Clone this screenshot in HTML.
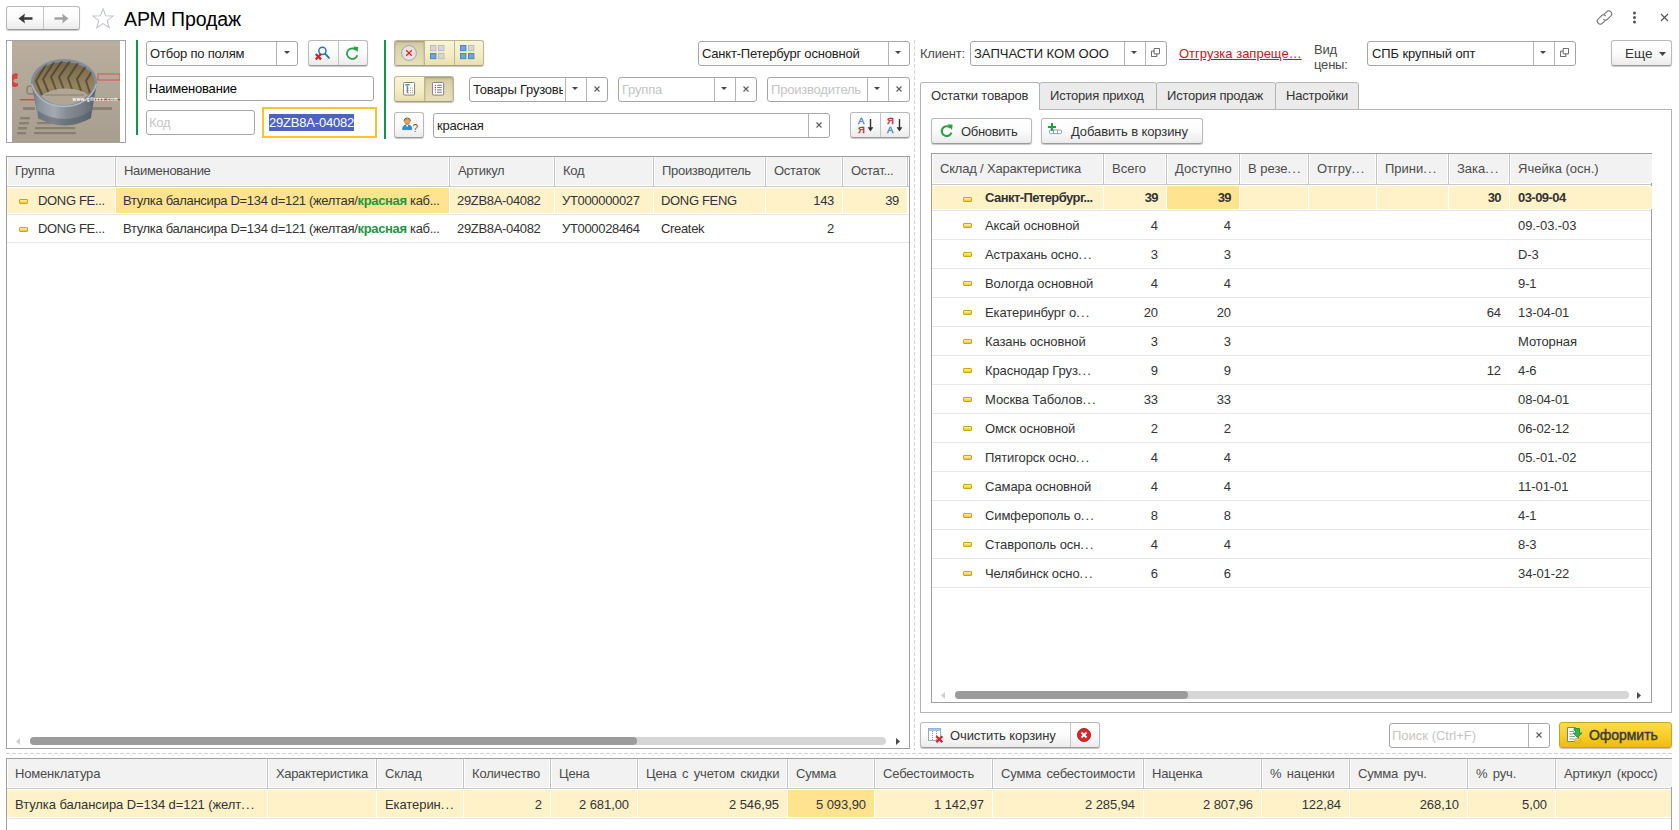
<!DOCTYPE html>
<html lang="ru">
<head>
<meta charset="utf-8">
<title>АРМ Продаж</title>
<style>
*{box-sizing:border-box;margin:0;padding:0}
html,body{width:1679px;height:830px;overflow:hidden;background:#fff}
body{position:relative;font-family:"Liberation Sans",Arial,sans-serif;font-size:13px;color:#333;line-height:15px;letter-spacing:-0.2px}
.a{position:absolute}
.inp{position:absolute;height:25px;border:1px solid #a6a6a6;border-radius:3px;background:#fff;white-space:nowrap;overflow:hidden}
.inp .t{position:absolute;left:3px;top:4px;color:#222}
.inp .ph{color:#c4c4c4}
.inp .dv{position:absolute;top:0;bottom:0;width:1px;background:#b4b4b4}
.inp svg{position:absolute}
.btn{position:absolute;height:26px;border:1px solid #b9b9b9;border-bottom-color:#9a9a9a;border-radius:3px;background:linear-gradient(#ffffff 0%,#fbfbfb 50%,#ebebeb 100%);box-shadow:0 1px 1px rgba(0,0,0,.22);white-space:nowrap}
.btn .dv{position:absolute;top:0;bottom:0;width:1px;background:#c4c4c4}
.btn svg,.ybtn svg{position:absolute}
.ybtn{position:absolute;height:26px;border:1px solid #bdb695;border-bottom-color:#a59f80;border-radius:3px;background:linear-gradient(#f9f4d6 0%,#f3ecc4 60%,#e9e0ae 100%);box-shadow:0 1px 1px rgba(0,0,0,.25)}
.ybtn .pr{position:absolute;top:0;bottom:0;background:linear-gradient(#cfc8a0 0%,#ddd5ad 40%,#e8e0b8 100%);box-shadow:inset 0 1px 2px rgba(0,0,0,.25)}
.ybtn .dv{position:absolute;top:0;bottom:0;width:1px;background:#bdb695}
.grid{position:absolute;border:1px solid #a0a0a0;background:#fff;overflow:hidden}
.hd{position:absolute;background:#f2f2f2;color:#4c4c4c;white-space:nowrap;overflow:hidden}
.hd span{position:absolute;left:8px;top:6px;letter-spacing:-0.3px}
.hl{position:absolute;background:#c3c3c3;width:1px}
.c{position:absolute;white-space:nowrap;overflow:hidden;color:#333;letter-spacing:-0.33px}
.c span{position:absolute;top:0}
.r{text-align:right}
.sep{position:absolute;left:0;right:0;height:1px;background:#e4e4e4}
.ic{position:absolute;width:9px;height:5px;border:1px solid #c9a415;border-radius:1px;background:linear-gradient(#fff3a8,#f0c82a)}
</style>
</head>
<body>

<!-- ===== title bar ===== -->
<div class="btn" style="left:6px;top:6px;width:74px;height:24px">
  <div class="dv" style="left:36px"></div>
  <svg style="left:11px;top:6px" width="15" height="11" viewBox="0 0 15 11"><path d="M0.5 5.5 L7 0.6 L6.2 4.3 H14.5 V6.7 H6.2 L7 10.4 Z" fill="#3a3a3a"/></svg>
  <svg style="left:47px;top:6px" width="15" height="11" viewBox="0 0 15 11"><path d="M14.5 5.5 L8 0.6 L8.8 4.3 H0.5 V6.7 H8.8 L8 10.4 Z" fill="#a2a2a2"/></svg>
</div>
<svg class="a" style="left:91px;top:7px" width="24" height="22" viewBox="0 0 26 24"><path d="M13 2 L15.9 9.6 L24 9.9 L17.6 14.9 L19.8 22.6 L13 18.1 L6.2 22.6 L8.4 14.9 L2 9.9 L10.1 9.6 Z" fill="#fff" stroke="#c0c3cc" stroke-width="1.15" stroke-linejoin="miter"/></svg>
<div class="a" style="left:124px;top:7px;font-size:19.5px;letter-spacing:-0.1px;line-height:24px;color:#000;white-space:nowrap">АРМ Продаж</div>

<!-- ===== top right ===== -->
<svg class="a" style="left:1595px;top:9px" width="19" height="17" viewBox="0 0 19 17"><g fill="none" stroke="#6a6a6a" stroke-width="1.05" stroke-linecap="round"><path d="M9.2 5.2 L11.6 2.8 A2.9 2.9 0 0 1 15.8 7 L12.6 10.2 A2.9 2.9 0 0 1 8.6 10.3"/><path d="M9.8 11.8 L7.4 14.2 A2.9 2.9 0 0 1 3.2 10 L6.4 6.8 A2.9 2.9 0 0 1 10.4 6.7"/></g></svg>
<svg class="a" style="left:1632px;top:11px" width="5" height="13" viewBox="0 0 5 13"><circle cx="2.5" cy="2" r="1.5" fill="#555"/><circle cx="2.5" cy="6.5" r="1.5" fill="#555"/><circle cx="2.5" cy="11" r="1.5" fill="#555"/></svg>
<svg class="a" style="left:1660px;top:13px" width="9" height="9" viewBox="0 0 9 9"><path d="M1 1L8 8M8 1L1 8" stroke="#555" stroke-width="1.2"/></svg>

<div class="a" style="left:920px;top:46px;color:#4a4a4a;white-space:nowrap">Клиент:</div>
<div class="inp" style="left:970px;top:41px;width:197px"><span class="t" style="left:3px;letter-spacing:0">ЗАПЧАСТИ КОМ ООО</span><div class="dv" style="left:153px"></div><div class="dv" style="left:174px"></div>
  <svg style="left:160px;top:9px" width="6" height="3" viewBox="0 0 6 3"><path d="M0 0H6L3 3Z" fill="#444"/></svg>
  <svg style="left:180px;top:6px" width="9" height="9" viewBox="0 0 10 10"><path d="M3.5 .5H9.5V6.5H3.5Z M3.5 3.5H.5V9.5H6.5V6.5" fill="none" stroke="#555" stroke-width="1"/></svg></div>
<div class="a" style="left:1179px;top:46px;color:#c4161c;text-decoration:underline;white-space:nowrap;letter-spacing:0">Отгрузка запреще…</div>
<div class="a" style="left:1314px;top:42px;color:#4a4a4a;line-height:15px">Вид<br>цены:</div>
<div class="inp" style="left:1367px;top:41px;width:209px"><span class="t" style="left:4px;letter-spacing:-0.1px">СПБ крупный опт</span><div class="dv" style="left:165px"></div><div class="dv" style="left:186px"></div>
  <svg style="left:172px;top:9px" width="6" height="3" viewBox="0 0 6 3"><path d="M0 0H6L3 3Z" fill="#444"/></svg>
  <svg style="left:192px;top:6px" width="9" height="9" viewBox="0 0 10 10"><path d="M3.5 .5H9.5V6.5H3.5Z M3.5 3.5H.5V9.5H6.5V6.5" fill="none" stroke="#555" stroke-width="1"/></svg></div>
<div class="btn" style="left:1611px;top:40px;width:61px"><span class="a" style="left:13px;top:5px;color:#333;font-size:13.5px;letter-spacing:0">Еще</span>
  <svg style="left:47px;top:11px" width="7" height="4" viewBox="0 0 7 4"><path d="M0 0H7L3.5 4Z" fill="#444"/></svg></div>

<!-- ===== photo ===== -->
<div class="a" style="left:6px;top:40px;width:120px;height:103px;border:1px solid #a3a3a3;background:#fff;overflow:hidden">
<svg class="a" style="left:5px;top:0" width="108" height="101" viewBox="0 0 108 101">
  <defs>
    <linearGradient id="pbg" x1="0" y1="0" x2="0" y2="1"><stop offset="0" stop-color="#b9ae9e"/><stop offset="1" stop-color="#a89e90"/></linearGradient>
    <linearGradient id="pst" x1="0" y1="0" x2="1" y2="0"><stop offset="0" stop-color="#66717d"/><stop offset=".12" stop-color="#8a949e"/><stop offset=".35" stop-color="#a3aab1"/><stop offset=".55" stop-color="#838b93"/><stop offset=".8" stop-color="#727a83"/><stop offset="1" stop-color="#5a626b"/></linearGradient>
    <linearGradient id="pin" x1="0" y1="0" x2="0" y2="1"><stop offset="0" stop-color="#75664a"/><stop offset=".6" stop-color="#94845f"/><stop offset="1" stop-color="#85775c"/></linearGradient>
    <clipPath id="pcl"><ellipse cx="52" cy="41" rx="31" ry="21"/></clipPath>
    <filter id="pbl" x="-5%" y="-5%" width="110%" height="110%"><feGaussianBlur stdDeviation=".55"/></filter>
  </defs>
  <rect width="108" height="101" fill="url(#pbg)"/>
  <g filter="url(#pbl)">
    <!-- printed red marks on cardboard -->
    <path d="M0 34 Q3 31 6 33 L5 38 Q2 37 1 40 Q3 43 6 42 L6 45 Q2 47 0 45Z" fill="#d8443c"/>
    <rect x="86" y="33" width="22" height="6" fill="none" stroke="#d6564e" stroke-width="1"/>
    <rect x="8" y="58" width="100" height="1.4" fill="#d5463f"/>
    <rect x="15" y="45" width="62" height="8" rx="2" fill="none" stroke="#5d584f" stroke-width=".7"/>
    <g fill="#6a645a" opacity=".55">
      <rect x="11" y="66" width="12" height="3"/><rect x="80" y="66" width="20" height="3"/>
      <rect x="8" y="76" width="10" height="2.4"/><rect x="7" y="81" width="10" height="2.4"/><rect x="6" y="86" width="9" height="2.4"/><rect x="5" y="91" width="9" height="2.4"/>
      <rect x="23" y="86" width="40" height="2.2"/><rect x="22" y="91" width="42" height="2.2"/><rect x="25" y="81" width="14" height="2.2"/><rect x="26" y="76" width="8" height="2.2"/>
    </g>
    <!-- bushing -->
    <path d="M19 41 L26 77 Q52 92 79 77 L85 41 Z" fill="url(#pst)"/>
    <path d="M26 70 Q52 86 79 70 L79 77 Q52 92 26 77Z" fill="#4c545d" opacity=".45"/>
    <ellipse cx="52" cy="41" rx="33" ry="23" fill="#7f8d9c"/>
    <ellipse cx="52" cy="41.5" rx="30.5" ry="20.5" fill="url(#pin)"/>
    <g clip-path="url(#pcl)" fill="none" stroke="#3f3522" stroke-width="2" opacity=".62">
      <path d="M36 20 L24 40 L31 56"/><path d="M44 18 L31 38 L38 55"/><path d="M52 17 L39 36 L46 54"/><path d="M60 17 L47 36 L54 54"/><path d="M68 19 L56 37 L62 54"/><path d="M76 22 L65 38 L70 53"/><path d="M82 27 L74 40 L78 52"/>
    </g>
    <path d="M29 55 Q40 47 54 47.5 Q70 48 76 54 Q66 64 52 64 Q38 64 29 55Z" fill="#b1a696"/>
    <path d="M33 54 H72" stroke="#6a645a" stroke-width="1.2" opacity=".6"/>
    <path d="M19.5 43 Q28 65.5 52 65.5 Q77 65 84.5 43" fill="none" stroke="#b3bcc5" stroke-width="1.3"/>
  </g>
  <text x="60.5" y="60.3" font-family="Liberation Sans,Arial,sans-serif" font-size="4.6" font-weight="bold" fill="#fff" textLength="45">www.gfhxxx.com</text>
</svg>
</div>

<!-- ===== filters ===== -->
<div class="a" style="left:136px;top:40px;width:2px;height:95px;background:#0f9648"></div>
<div class="a" style="left:384px;top:40px;width:2px;height:99px;background:#0f9648"></div>

<div class="inp" style="left:146px;top:41px;width:152px"><span class="t">Отбор по полям</span><div class="dv" style="left:129px"></div>
  <svg style="left:137px;top:9px" width="6" height="3" viewBox="0 0 6 3"><path d="M0 0H6L3 3Z" fill="#444"/></svg></div>

<div class="btn" style="left:308px;top:40px;width:60px">
  <div class="dv" style="left:29px"></div>
  <svg style="left:6px;top:4px" width="18" height="17" viewBox="0 0 18 17"><circle cx="7.4" cy="5.8" r="3.6" fill="#fff" stroke="#2b74b4" stroke-width="1.5"/><path d="M10 8.6 L14 12.9" stroke="#2b74b4" stroke-width="1.9" stroke-linecap="round"/><path d="M0.8 9 L6 14.4 M6 9 L0.8 14.4" stroke="#d8232a" stroke-width="2.3"/></svg>
  <svg style="left:35px;top:5px" width="16" height="15" viewBox="0 0 16 15"><path d="M12.3 4.2 A5.3 5.3 0 1 0 13.3 9.3" fill="none" stroke="#2a9f40" stroke-width="1.8"/><path d="M9 0.6 L14.2 0.9 L13.6 6.2 Z" fill="#27a243"/></svg>
</div>

<div class="inp" style="left:146px;top:76px;width:228px;height:25px"><span class="t" style="top:4px;left:2px;color:#000">Наименование</span></div>
<div class="inp" style="left:146px;top:110px;width:109px"><span class="t ph" style="left:2px">Код</span></div>
<div class="a" style="left:262px;top:107px;width:115px;height:31px;border:2px solid #f8c32b;background:#fff">
  <div class="a" style="left:5px;top:5px;width:85px;height:17px;background:#4d63c2;color:#fff;line-height:17px;white-space:nowrap">29ZB8A-04082</div>
</div>

<div class="ybtn" style="left:394px;top:40px;width:90px">
  <div class="pr" style="left:0;width:29px;border-radius:2px 0 0 2px"></div>
  <div class="dv" style="left:29px"></div><div class="dv" style="left:59px"></div>
  <svg style="left:5px;top:3px" width="18" height="18" viewBox="0 0 18 18"><circle cx="9" cy="9" r="7.4" fill="#e6e4df" stroke="#a6a6a6" stroke-width="1"/><path d="M6.2 6.2 L11.8 11.8 M11.8 6.2 L6.2 11.8" stroke="#e8212b" stroke-width="1.3"/></svg>
  <svg style="left:35px;top:4px" width="16" height="15" viewBox="0 0 16 15"><rect x="0.5" y="0.5" width="5.4" height="5.2" fill="#d6d6d6" stroke="#bcbcbc"/><rect x="8.5" y="0.5" width="5.4" height="5.2" fill="#d6d6d6" stroke="#bcbcbc"/><rect x="0.5" y="8.5" width="5.4" height="5.2" fill="#6ba6e1" stroke="#4a86c5"/><rect x="8.5" y="8.5" width="5.4" height="5.2" fill="#d6d6d6" stroke="#bcbcbc"/></svg>
  <svg style="left:65px;top:4px" width="16" height="15" viewBox="0 0 16 15"><rect x="0.5" y="0.5" width="5.4" height="5.2" fill="#6ba6e1" stroke="#4a86c5"/><rect x="8.5" y="0.5" width="5.4" height="5.2" fill="#d6d6d6" stroke="#bcbcbc"/><rect x="0.5" y="8.5" width="5.4" height="5.2" fill="#6ba6e1" stroke="#4a86c5"/><rect x="8.5" y="8.5" width="5.4" height="5.2" fill="#6ba6e1" stroke="#4a86c5"/></svg>
</div>

<div class="ybtn" style="left:394px;top:76px;width:60px">
  <div class="pr" style="left:30px;width:28px;border-radius:0 2px 2px 0"></div>
  <div class="dv" style="left:29px"></div>
  <svg style="left:8px;top:5px" width="13" height="14" viewBox="0 0 14 15"><rect x=".5" y=".5" width="12" height="13.5" rx="1" fill="#fff" stroke="#7a7a7a"/><path d="M2.5 3 H7" stroke="#2aa198" stroke-width="1.6"/><path d="M4.5 4 V11.5 M4.5 6.5 H6 M4.5 9 H6 M4.5 11.5 H6" stroke="#555" stroke-width="1" fill="none"/><path d="M7.5 6.5 H10.5 M7.5 9 H10.5 M7.5 11.5 H10.5" stroke="#888" stroke-width="1" stroke-dasharray="1 1"/></svg>
  <svg style="left:37px;top:5px" width="13" height="14" viewBox="0 0 14 15"><rect x=".5" y=".5" width="12" height="13.5" rx="1" fill="#fff" stroke="#7a7a7a"/><path d="M3 3.5H4.2M3 6H4.2M3 8.5H4.2M3 11H4.2" stroke="#d8232a" stroke-width="1.2"/><path d="M5.5 3.5H10.5M5.5 6H10.5M5.5 8.5H10.5M5.5 11H10.5" stroke="#666" stroke-width="1"/></svg>
</div>

<div class="inp" style="left:469px;top:77px;width:139px"><span class="t" style="left:3px;width:90px;overflow:hidden">Товары Грузовые</span><div class="dv" style="left:95px"></div><div class="dv" style="left:116px"></div>
  <svg style="left:102px;top:9px" width="6" height="3" viewBox="0 0 6 3"><path d="M0 0H6L3 3Z" fill="#444"/></svg>
  <svg style="left:123px;top:7px" width="8" height="8" viewBox="0 0 8 8"><path d="M1.5 1.5L6.5 6.5M6.5 1.5L1.5 6.5" stroke="#5a5a5a" stroke-width="1.1"/></svg></div>
<div class="inp" style="left:618px;top:77px;width:139px"><span class="t ph" style="left:3px">Группа</span><div class="dv" style="left:95px"></div><div class="dv" style="left:116px"></div>
  <svg style="left:102px;top:9px" width="6" height="3" viewBox="0 0 6 3"><path d="M0 0H6L3 3Z" fill="#444"/></svg>
  <svg style="left:123px;top:7px" width="8" height="8" viewBox="0 0 8 8"><path d="M1.5 1.5L6.5 6.5M6.5 1.5L1.5 6.5" stroke="#5a5a5a" stroke-width="1.1"/></svg></div>
<div class="inp" style="left:767px;top:77px;width:143px"><span class="t ph" style="left:3px">Производитель</span><div class="dv" style="left:99px"></div><div class="dv" style="left:120px"></div>
  <svg style="left:106px;top:9px" width="6" height="3" viewBox="0 0 6 3"><path d="M0 0H6L3 3Z" fill="#444"/></svg>
  <svg style="left:127px;top:7px" width="8" height="8" viewBox="0 0 8 8"><path d="M1.5 1.5L6.5 6.5M6.5 1.5L1.5 6.5" stroke="#5a5a5a" stroke-width="1.1"/></svg></div>
<div class="inp" style="left:698px;top:41px;width:212px"><span class="t">Санкт-Петербург основной</span><div class="dv" style="left:189px"></div>
  <svg style="left:196px;top:9px" width="6" height="3" viewBox="0 0 6 3"><path d="M0 0H6L3 3Z" fill="#444"/></svg></div>

<div class="btn" style="left:394px;top:112px;width:30px">
  <svg style="left:6px;top:4px" width="19" height="16" viewBox="0 0 19 16"><path d="M3 4.2 A3.2 3.2 0 0 1 9.4 4.2" fill="none" stroke="#5b4a33" stroke-width="1"/><circle cx="6.2" cy="4.4" r="2.7" fill="#e0a55c" stroke="#b98038" stroke-width=".7"/><path d="M1.6 12.6 C1.6 8.8 3.6 7.8 6.2 7.8 S10.8 8.8 10.8 12.6 Z" fill="#2f8fd0" stroke="#1f6fae" stroke-width=".7"/><path d="M5 7.9 L6.2 10.3 L7.4 7.9Z" fill="#fff"/><text x="11.6" y="15" font-family="Liberation Sans,Arial,sans-serif" font-size="10" fill="#7a4a1e">?</text></svg>
</div>
<div class="inp" style="left:433px;top:113px;width:397px"><span class="t" style="left:3px">красная</span><div class="dv" style="left:374px"></div>
  <svg style="left:381px;top:7px" width="8" height="8" viewBox="0 0 8 8"><path d="M1.5 1.5L6.5 6.5M6.5 1.5L1.5 6.5" stroke="#5a5a5a" stroke-width="1.1"/></svg></div>
<div class="btn" style="left:850px;top:112px;width:60px">
  <div class="dv" style="left:29px"></div>
  <svg style="left:6px;top:3px" width="20" height="18" viewBox="0 0 20 18"><text x="1" y="8" font-family="Liberation Sans,Arial,sans-serif" font-size="9.5" fill="#2b7fc3" stroke="#2b7fc3" stroke-width=".35">А</text><text x="1" y="17" font-family="Liberation Sans,Arial,sans-serif" font-size="9.5" fill="#b5232b" stroke="#b5232b" stroke-width=".35">Я</text><path d="M13.5 3 V13" stroke="#333" stroke-width="1.4"/><path d="M10.6 11.3 H16.4 L13.5 15.5Z" fill="#333"/></svg>
  <svg style="left:35px;top:3px" width="20" height="18" viewBox="0 0 20 18"><text x="1" y="8" font-family="Liberation Sans,Arial,sans-serif" font-size="9.5" fill="#b5232b" stroke="#b5232b" stroke-width=".35">Я</text><text x="1" y="17" font-family="Liberation Sans,Arial,sans-serif" font-size="9.5" fill="#2b7fc3" stroke="#2b7fc3" stroke-width=".35">А</text><path d="M13.5 3 V13" stroke="#333" stroke-width="1.4"/><path d="M10.6 11.3 H16.4 L13.5 15.5Z" fill="#333"/></svg>
</div>

<!-- splitters -->
<div class="a" style="left:914px;top:40px;width:1px;height:710px;background:repeating-linear-gradient(180deg,#d2d2d2 0,#d2d2d2 4px,transparent 4px,transparent 6px)"></div>
<div class="a" style="left:6px;top:753px;width:1667px;height:1px;background:repeating-linear-gradient(90deg,#d2d2d2 0,#d2d2d2 4px,transparent 4px,transparent 6px)"></div>

<!-- GEN:LEFTGRID -->
<!-- ===== left grid ===== -->
<div class="grid" style="left:6px;top:156px;width:904px;height:593px"></div>
<div class="hd" style="left:8px;top:157px;width:106px;height:28px"><span style="left:7px;">Группа</span></div>
<div class="hl" style="left:115px;top:157px;height:29px"></div>
<div class="hd" style="left:117px;top:157px;width:331px;height:28px"><span style="left:7px;">Наименование</span></div>
<div class="hl" style="left:449px;top:157px;height:29px"></div>
<div class="hd" style="left:451px;top:157px;width:102px;height:28px"><span style="left:7px;">Артикул</span></div>
<div class="hl" style="left:554px;top:157px;height:29px"></div>
<div class="hd" style="left:556px;top:157px;width:96px;height:28px"><span style="left:7px;">Код</span></div>
<div class="hl" style="left:653px;top:157px;height:29px"></div>
<div class="hd" style="left:655px;top:157px;width:109px;height:28px"><span style="left:7px;">Производитель</span></div>
<div class="hl" style="left:765px;top:157px;height:29px"></div>
<div class="hd" style="left:767px;top:157px;width:74px;height:28px"><span style="left:7px;">Остаток</span></div>
<div class="hl" style="left:842px;top:157px;height:29px"></div>
<div class="hd" style="left:844px;top:157px;width:62px;height:28px"><span style="left:7px;">Остат...</span></div>
<div class="hl" style="left:907px;top:157px;height:29px"></div>
<div class="a" style="left:7px;top:186px;width:902px;height:1px;background:#c9c9c9"></div>
<div class="c" style="left:7px;top:188px;width:108px;height:25px;background:#fff2c9;"><i class="ic" style="left:12px;top:11px"></i><span style="left:31px;top:5px">DONG FE...</span></div>
<div class="c" style="left:116px;top:188px;width:333px;height:25px;background:#ffe38f;"><span style="left:7px;top:5px">Втулка балансира D=134 d=121 (желтая/<b style="color:#1a9641">красная</b> каб...</span></div>
<div class="c" style="left:450px;top:188px;width:104px;height:25px;background:#fff2c9;"><span style="left:7px;top:5px">29ZB8A-04082</span></div>
<div class="c" style="left:555px;top:188px;width:98px;height:25px;background:#fff2c9;"><span style="left:7px;top:5px">УТ000000027</span></div>
<div class="c" style="left:654px;top:188px;width:111px;height:25px;background:#fff2c9;"><span style="left:7px;top:5px">DONG FENG</span></div>
<div class="c" style="left:766px;top:188px;width:76px;height:25px;background:#fff2c9;"><span style="right:8px;top:5px">143</span></div>
<div class="c" style="left:843px;top:188px;width:64px;height:25px;background:#fff2c9;"><span style="right:8px;top:5px">39</span></div>
<div class="a" style="left:7px;top:214px;width:902px;height:1px;background:#e6e6e6"></div>
<div class="c" style="left:7px;top:216px;width:108px;height:25px;"><i class="ic" style="left:12px;top:11px"></i><span style="left:31px;top:5px">DONG FE...</span></div>
<div class="c" style="left:116px;top:216px;width:333px;height:25px;"><span style="left:7px;top:5px">Втулка балансира D=134 d=121 (желтая/<b style="color:#1a9641">красная</b> каб...</span></div>
<div class="c" style="left:450px;top:216px;width:104px;height:25px;"><span style="left:7px;top:5px">29ZB8A-04082</span></div>
<div class="c" style="left:555px;top:216px;width:98px;height:25px;"><span style="left:7px;top:5px">УТ000028464</span></div>
<div class="c" style="left:654px;top:216px;width:111px;height:25px;"><span style="left:7px;top:5px">Createk</span></div>
<div class="c" style="left:766px;top:216px;width:76px;height:25px;"><span style="right:8px;top:5px">2</span></div>
<div class="a" style="left:7px;top:242px;width:902px;height:1px;background:#e6e6e6"></div>
<div class="a" style="left:30px;top:737px;width:856px;height:8px;border-radius:4px;background:#d6d6d6"></div>
<div class="a" style="left:30px;top:737px;width:607px;height:8px;border-radius:4px;background:#9b9b9b"></div>
<svg class="a" style="left:16px;top:738px" width="4" height="7" viewBox="0 0 4 7"><path d="M4 0V7L0 3.5Z" fill="#cfcfcf"/></svg>
<svg class="a" style="left:896px;top:738px" width="4" height="7" viewBox="0 0 4 7"><path d="M0 0V7L4 3.5Z" fill="#4a4a4a"/></svg>
<!-- /GEN:LEFTGRID -->
<!-- GEN:RIGHTPANE -->
<!-- ===== right pane: tabs ===== -->
<div class="a" style="left:920px;top:109px;width:752px;height:604px;border:1px solid #b4b4b4;background:#fff"></div>
<div class="a" style="left:1039px;top:82px;width:118px;height:28px;border:1px solid #b4b4b4;border-radius:3px 3px 0 0;background:#ebebeb;color:#333;white-space:nowrap"><span class="a" style="left:10px;top:4.5px">История приход</span></div>
<div class="a" style="left:1156px;top:82px;width:120px;height:28px;border:1px solid #b4b4b4;border-radius:3px 3px 0 0;background:#ebebeb;color:#333;white-space:nowrap"><span class="a" style="left:10px;top:4.5px">История продаж</span></div>
<div class="a" style="left:1275px;top:82px;width:84px;height:28px;border:1px solid #b4b4b4;border-radius:3px 3px 0 0;background:#ebebeb;color:#333;white-space:nowrap"><span class="a" style="left:10px;top:4.5px">Настройки</span></div>
<div class="a" style="left:920px;top:82px;width:120px;height:28px;border:1px solid #b4b4b4;border-bottom:0;border-radius:3px 3px 0 0;background:#fff;color:#333;white-space:nowrap"><span class="a" style="left:10px;top:4.5px">Остатки товаров</span></div>
<div class="btn" style="left:931px;top:118px;width:101px"><svg style="left:7px;top:5px" width="15" height="14" viewBox="0 0 16 15"><path d="M12.3 4.2 A5.3 5.3 0 1 0 13.3 9.3" fill="none" stroke="#2a9f40" stroke-width="2.2"/><path d="M9 0.4 L14.6 0.7 L13.9 6.4 Z" fill="#2a9f40"/></svg><span class="a" style="left:29px;top:5px;color:#333;letter-spacing:-0.3px">Обновить</span></div>
<div class="btn" style="left:1041px;top:118px;width:162px"><svg style="left:6px;top:4px" width="15" height="13" viewBox="0 0 15 13"><path d="M4 0V8M0 4H8" stroke="#1fa03a" stroke-width="2.1"/><rect x="1.5" y="7" width="12" height="3.6" rx="1" fill="#fff" stroke="#8aa0b4" stroke-width="1"/><path d="M5.5 7V10.6M9.5 7V10.6" stroke="#8aa0b4" stroke-width="1"/><path d="M4 2V8M2 4H8" stroke="#1fa03a" stroke-width="2.1"/></svg><span class="a" style="left:29px;top:5px;color:#333;letter-spacing:-0.1px">Добавить в корзину</span></div>
<!-- right grid -->
<div class="grid" style="left:931px;top:153px;width:721px;height:550px"></div>
<div class="hd" style="left:933px;top:154px;width:169px;height:29px"><span style="left:7px;letter-spacing:-0.19px;top:7px;">Склад / Характеристика</span></div>
<div class="hl" style="left:1103px;top:154px;height:30px"></div>
<div class="hd" style="left:1105px;top:154px;width:60px;height:29px"><span style="left:7px;letter-spacing:0px;top:7px;">Всего</span></div>
<div class="hl" style="left:1166px;top:154px;height:30px"></div>
<div class="hd" style="left:1168px;top:154px;width:70px;height:29px"><span style="left:7px;letter-spacing:0px;top:7px;">Доступно</span></div>
<div class="hl" style="left:1239px;top:154px;height:30px"></div>
<div class="hd" style="left:1241px;top:154px;width:66px;height:29px"><span style="left:7px;letter-spacing:0px;top:7px;">В резе<i style="font-style:normal;letter-spacing:1.1px">...</i></span></div>
<div class="hl" style="left:1308px;top:154px;height:30px"></div>
<div class="hd" style="left:1310px;top:154px;width:65px;height:29px"><span style="left:7px;letter-spacing:0px;top:7px;">Отгру<i style="font-style:normal;letter-spacing:1.1px">...</i></span></div>
<div class="hl" style="left:1376px;top:154px;height:30px"></div>
<div class="hd" style="left:1378px;top:154px;width:69px;height:29px"><span style="left:7px;letter-spacing:0px;top:7px;">Прини<i style="font-style:normal;letter-spacing:1.1px">...</i></span></div>
<div class="hl" style="left:1448px;top:154px;height:30px"></div>
<div class="hd" style="left:1450px;top:154px;width:58px;height:29px"><span style="left:7px;letter-spacing:0px;top:7px;">Зака<i style="font-style:normal;letter-spacing:1.1px">...</i></span></div>
<div class="hl" style="left:1509px;top:154px;height:30px"></div>
<div class="hd" style="left:1511px;top:154px;width:141px;height:29px"><span style="left:7px;letter-spacing:0px;top:7px;">Ячейка (осн.)</span></div>
<div class="a" style="left:932px;top:184px;width:719px;height:1px;background:#c9c9c9"></div>
<div class="c" style="left:932px;top:186px;width:171px;height:23px;background:#fff2c9;font-weight:bold;letter-spacing:-0.55px;"><i class="ic" style="left:31px;top:11px"></i><span style="left:53px;top:4px">Санкт-Петербург...</span></div>
<div class="c" style="left:1104px;top:186px;width:62px;height:23px;background:#fff2c9;font-weight:bold;letter-spacing:-0.55px;"><span style="right:8px;top:4px">39</span></div>
<div class="c" style="left:1167px;top:186px;width:72px;height:23px;background:#ffe38f;font-weight:bold;letter-spacing:-0.55px;"><span style="right:8px;top:4px">39</span></div>
<div class="c" style="left:1240px;top:186px;width:68px;height:23px;background:#fff2c9;font-weight:bold;letter-spacing:-0.55px;"></div>
<div class="c" style="left:1309px;top:186px;width:67px;height:23px;background:#fff2c9;font-weight:bold;letter-spacing:-0.55px;"></div>
<div class="c" style="left:1377px;top:186px;width:71px;height:23px;background:#fff2c9;font-weight:bold;letter-spacing:-0.55px;"></div>
<div class="c" style="left:1449px;top:186px;width:60px;height:23px;background:#fff2c9;font-weight:bold;letter-spacing:-0.55px;"><span style="right:8px;top:4px">30</span></div>
<div class="c" style="left:1510px;top:186px;width:142px;height:23px;background:#fff2c9;font-weight:bold;letter-spacing:-0.55px;"><span style="left:8px;top:4px">03-09-04</span></div>
<div class="a" style="left:932px;top:210px;width:719px;height:1px;background:#e6e6e6"></div>
<div class="c" style="left:932px;top:212px;width:171px;height:26px;letter-spacing:-0.1px;"><i class="ic" style="left:31px;top:11px"></i><span style="left:53px;top:6px">Аксай основной</span></div>
<div class="c" style="left:1104px;top:212px;width:62px;height:26px;letter-spacing:-0.1px;"><span style="right:8px;top:6px">4</span></div>
<div class="c" style="left:1167px;top:212px;width:72px;height:26px;letter-spacing:-0.1px;"><span style="right:8px;top:6px">4</span></div>
<div class="c" style="left:1510px;top:212px;width:142px;height:26px;letter-spacing:-0.1px;"><span style="left:8px;top:6px">09.-03.-03</span></div>
<div class="a" style="left:932px;top:239px;width:719px;height:1px;background:#e6e6e6"></div>
<div class="c" style="left:932px;top:241px;width:171px;height:26px;letter-spacing:-0.1px;"><i class="ic" style="left:31px;top:11px"></i><span style="left:53px;top:6px">Астрахань осно<span style="letter-spacing:1.1px">...</span></span></div>
<div class="c" style="left:1104px;top:241px;width:62px;height:26px;letter-spacing:-0.1px;"><span style="right:8px;top:6px">3</span></div>
<div class="c" style="left:1167px;top:241px;width:72px;height:26px;letter-spacing:-0.1px;"><span style="right:8px;top:6px">3</span></div>
<div class="c" style="left:1510px;top:241px;width:142px;height:26px;letter-spacing:-0.1px;"><span style="left:8px;top:6px">D-3</span></div>
<div class="a" style="left:932px;top:268px;width:719px;height:1px;background:#e6e6e6"></div>
<div class="c" style="left:932px;top:270px;width:171px;height:26px;letter-spacing:-0.1px;"><i class="ic" style="left:31px;top:11px"></i><span style="left:53px;top:6px">Вологда основной</span></div>
<div class="c" style="left:1104px;top:270px;width:62px;height:26px;letter-spacing:-0.1px;"><span style="right:8px;top:6px">4</span></div>
<div class="c" style="left:1167px;top:270px;width:72px;height:26px;letter-spacing:-0.1px;"><span style="right:8px;top:6px">4</span></div>
<div class="c" style="left:1510px;top:270px;width:142px;height:26px;letter-spacing:-0.1px;"><span style="left:8px;top:6px">9-1</span></div>
<div class="a" style="left:932px;top:297px;width:719px;height:1px;background:#e6e6e6"></div>
<div class="c" style="left:932px;top:299px;width:171px;height:26px;letter-spacing:-0.1px;"><i class="ic" style="left:31px;top:11px"></i><span style="left:53px;top:6px">Екатеринбург о<span style="letter-spacing:1.1px">...</span></span></div>
<div class="c" style="left:1104px;top:299px;width:62px;height:26px;letter-spacing:-0.1px;"><span style="right:8px;top:6px">20</span></div>
<div class="c" style="left:1167px;top:299px;width:72px;height:26px;letter-spacing:-0.1px;"><span style="right:8px;top:6px">20</span></div>
<div class="c" style="left:1449px;top:299px;width:60px;height:26px;letter-spacing:-0.1px;"><span style="right:8px;top:6px">64</span></div>
<div class="c" style="left:1510px;top:299px;width:142px;height:26px;letter-spacing:-0.1px;"><span style="left:8px;top:6px">13-04-01</span></div>
<div class="a" style="left:932px;top:326px;width:719px;height:1px;background:#e6e6e6"></div>
<div class="c" style="left:932px;top:328px;width:171px;height:26px;letter-spacing:-0.1px;"><i class="ic" style="left:31px;top:11px"></i><span style="left:53px;top:6px">Казань основной</span></div>
<div class="c" style="left:1104px;top:328px;width:62px;height:26px;letter-spacing:-0.1px;"><span style="right:8px;top:6px">3</span></div>
<div class="c" style="left:1167px;top:328px;width:72px;height:26px;letter-spacing:-0.1px;"><span style="right:8px;top:6px">3</span></div>
<div class="c" style="left:1510px;top:328px;width:142px;height:26px;letter-spacing:-0.1px;"><span style="left:8px;top:6px">Моторная</span></div>
<div class="a" style="left:932px;top:355px;width:719px;height:1px;background:#e6e6e6"></div>
<div class="c" style="left:932px;top:357px;width:171px;height:26px;letter-spacing:-0.1px;"><i class="ic" style="left:31px;top:11px"></i><span style="left:53px;top:6px">Краснодар Груз<span style="letter-spacing:1.1px">...</span></span></div>
<div class="c" style="left:1104px;top:357px;width:62px;height:26px;letter-spacing:-0.1px;"><span style="right:8px;top:6px">9</span></div>
<div class="c" style="left:1167px;top:357px;width:72px;height:26px;letter-spacing:-0.1px;"><span style="right:8px;top:6px">9</span></div>
<div class="c" style="left:1449px;top:357px;width:60px;height:26px;letter-spacing:-0.1px;"><span style="right:8px;top:6px">12</span></div>
<div class="c" style="left:1510px;top:357px;width:142px;height:26px;letter-spacing:-0.1px;"><span style="left:8px;top:6px">4-6</span></div>
<div class="a" style="left:932px;top:384px;width:719px;height:1px;background:#e6e6e6"></div>
<div class="c" style="left:932px;top:386px;width:171px;height:26px;letter-spacing:-0.1px;"><i class="ic" style="left:31px;top:11px"></i><span style="left:53px;top:6px">Москва Таболов<span style="letter-spacing:1.1px">...</span></span></div>
<div class="c" style="left:1104px;top:386px;width:62px;height:26px;letter-spacing:-0.1px;"><span style="right:8px;top:6px">33</span></div>
<div class="c" style="left:1167px;top:386px;width:72px;height:26px;letter-spacing:-0.1px;"><span style="right:8px;top:6px">33</span></div>
<div class="c" style="left:1510px;top:386px;width:142px;height:26px;letter-spacing:-0.1px;"><span style="left:8px;top:6px">08-04-01</span></div>
<div class="a" style="left:932px;top:413px;width:719px;height:1px;background:#e6e6e6"></div>
<div class="c" style="left:932px;top:415px;width:171px;height:26px;letter-spacing:-0.1px;"><i class="ic" style="left:31px;top:11px"></i><span style="left:53px;top:6px">Омск основной</span></div>
<div class="c" style="left:1104px;top:415px;width:62px;height:26px;letter-spacing:-0.1px;"><span style="right:8px;top:6px">2</span></div>
<div class="c" style="left:1167px;top:415px;width:72px;height:26px;letter-spacing:-0.1px;"><span style="right:8px;top:6px">2</span></div>
<div class="c" style="left:1510px;top:415px;width:142px;height:26px;letter-spacing:-0.1px;"><span style="left:8px;top:6px">06-02-12</span></div>
<div class="a" style="left:932px;top:442px;width:719px;height:1px;background:#e6e6e6"></div>
<div class="c" style="left:932px;top:444px;width:171px;height:26px;letter-spacing:-0.1px;"><i class="ic" style="left:31px;top:11px"></i><span style="left:53px;top:6px">Пятигорск осно<span style="letter-spacing:1.1px">...</span></span></div>
<div class="c" style="left:1104px;top:444px;width:62px;height:26px;letter-spacing:-0.1px;"><span style="right:8px;top:6px">4</span></div>
<div class="c" style="left:1167px;top:444px;width:72px;height:26px;letter-spacing:-0.1px;"><span style="right:8px;top:6px">4</span></div>
<div class="c" style="left:1510px;top:444px;width:142px;height:26px;letter-spacing:-0.1px;"><span style="left:8px;top:6px">05.-01.-02</span></div>
<div class="a" style="left:932px;top:471px;width:719px;height:1px;background:#e6e6e6"></div>
<div class="c" style="left:932px;top:473px;width:171px;height:26px;letter-spacing:-0.1px;"><i class="ic" style="left:31px;top:11px"></i><span style="left:53px;top:6px">Самара основной</span></div>
<div class="c" style="left:1104px;top:473px;width:62px;height:26px;letter-spacing:-0.1px;"><span style="right:8px;top:6px">4</span></div>
<div class="c" style="left:1167px;top:473px;width:72px;height:26px;letter-spacing:-0.1px;"><span style="right:8px;top:6px">4</span></div>
<div class="c" style="left:1510px;top:473px;width:142px;height:26px;letter-spacing:-0.1px;"><span style="left:8px;top:6px">11-01-01</span></div>
<div class="a" style="left:932px;top:500px;width:719px;height:1px;background:#e6e6e6"></div>
<div class="c" style="left:932px;top:502px;width:171px;height:26px;letter-spacing:-0.1px;"><i class="ic" style="left:31px;top:11px"></i><span style="left:53px;top:6px">Симферополь о<span style="letter-spacing:1.1px">...</span></span></div>
<div class="c" style="left:1104px;top:502px;width:62px;height:26px;letter-spacing:-0.1px;"><span style="right:8px;top:6px">8</span></div>
<div class="c" style="left:1167px;top:502px;width:72px;height:26px;letter-spacing:-0.1px;"><span style="right:8px;top:6px">8</span></div>
<div class="c" style="left:1510px;top:502px;width:142px;height:26px;letter-spacing:-0.1px;"><span style="left:8px;top:6px">4-1</span></div>
<div class="a" style="left:932px;top:529px;width:719px;height:1px;background:#e6e6e6"></div>
<div class="c" style="left:932px;top:531px;width:171px;height:26px;letter-spacing:-0.1px;"><i class="ic" style="left:31px;top:11px"></i><span style="left:53px;top:6px">Ставрополь осн<span style="letter-spacing:1.1px">...</span></span></div>
<div class="c" style="left:1104px;top:531px;width:62px;height:26px;letter-spacing:-0.1px;"><span style="right:8px;top:6px">4</span></div>
<div class="c" style="left:1167px;top:531px;width:72px;height:26px;letter-spacing:-0.1px;"><span style="right:8px;top:6px">4</span></div>
<div class="c" style="left:1510px;top:531px;width:142px;height:26px;letter-spacing:-0.1px;"><span style="left:8px;top:6px">8-3</span></div>
<div class="a" style="left:932px;top:558px;width:719px;height:1px;background:#e6e6e6"></div>
<div class="c" style="left:932px;top:560px;width:171px;height:26px;letter-spacing:-0.1px;"><i class="ic" style="left:31px;top:11px"></i><span style="left:53px;top:6px">Челябинск осно<span style="letter-spacing:1.1px">...</span></span></div>
<div class="c" style="left:1104px;top:560px;width:62px;height:26px;letter-spacing:-0.1px;"><span style="right:8px;top:6px">6</span></div>
<div class="c" style="left:1167px;top:560px;width:72px;height:26px;letter-spacing:-0.1px;"><span style="right:8px;top:6px">6</span></div>
<div class="c" style="left:1510px;top:560px;width:142px;height:26px;letter-spacing:-0.1px;"><span style="left:8px;top:6px">34-01-22</span></div>
<div class="a" style="left:932px;top:587px;width:719px;height:1px;background:#e6e6e6"></div>
<div class="a" style="left:955px;top:691px;width:674px;height:8px;border-radius:4px;background:#d6d6d6"></div>
<div class="a" style="left:955px;top:691px;width:233px;height:8px;border-radius:4px;background:#9b9b9b"></div>
<svg class="a" style="left:941px;top:692px" width="4" height="7" viewBox="0 0 4 7"><path d="M4 0V7L0 3.5Z" fill="#cfcfcf"/></svg>
<svg class="a" style="left:1637px;top:692px" width="4" height="7" viewBox="0 0 4 7"><path d="M0 0V7L4 3.5Z" fill="#4a4a4a"/></svg>
<!-- /GEN:RIGHTPANE -->
<!-- GEN:BOTTOM -->
<!-- ===== bottom bar ===== -->
<div class="btn" style="left:920px;top:722px;width:180px;height:26px"><div class="dv" style="left:149px"></div>
<svg style="left:7px;top:5px" width="17" height="16" viewBox="0 0 17 16"><rect x=".5" y=".5" width="12" height="12" fill="#fff" stroke="#9bb0cb"/><rect x=".5" y=".5" width="12" height="2" fill="#a9c8ea" stroke="#8aa9cf" stroke-width=".6"/><path d="M4.5 3V12.5M8.5 3V12.5" stroke="#7f93ad" stroke-dasharray="1 1"/><path d="M.5 3V12.5" stroke="#8da2bd" stroke-dasharray="1 1"/><path d="M8.3 8.3L14.3 14.3M14.3 8.3L8.3 14.3" stroke="#e0202c" stroke-width="2.3"/></svg>
<span class="a" style="left:29px;top:5px;color:#333;letter-spacing:-0.1px">Очистить корзину</span>
<svg style="left:156px;top:5px" width="14" height="14" viewBox="0 0 15 15"><circle cx="7.5" cy="7.5" r="7" fill="#dc2626" stroke="#b81c1c" stroke-width="1"/><path d="M4.8 4.8L10.2 10.2M10.2 4.8L4.8 10.2" stroke="#fff" stroke-width="2"/></svg></div>
<div class="inp" style="left:1389px;top:723px;width:161px;height:25px"><span class="t ph" style="left:2px;top:4px;letter-spacing:0">Поиск (Ctrl+F)</span><div class="dv" style="left:138px"></div>
<svg style="left:145px;top:7px" width="8" height="8" viewBox="0 0 8 8"><path d="M1.5 1.5L6.5 6.5M6.5 1.5L1.5 6.5" stroke="#5a5a5a" stroke-width="1.1"/></svg></div>
<div class="a" style="left:1559px;top:722px;width:113px;height:26px;border:1px solid #c4a52a;border-radius:3px;background:linear-gradient(#fcda4c 0%,#f9cf2c 50%,#efbb0c 100%);box-shadow:0 1px 1px rgba(0,0,0,.25);white-space:nowrap">
<svg class="a" style="left:6px;top:4px" width="17" height="17" viewBox="0 0 17 17"><path d="M1.5 .5H9.5L12.5 3.5V14.5H1.5Z" fill="#fff" stroke="#7d7d7d"/><path d="M3.5 4.5H8M3.5 7H7M3.5 9.5H9M3.5 12H8" stroke="#9a9a9a"/><path d="M8 1.5H13.5V6H16L11.5 10.5L7 6H9.5V3.5H8Z" fill="#32b34a" stroke="#1d8a32" stroke-width=".8"/><ellipse cx="11.5" cy="14.6" rx="3.2" ry="1.3" fill="#f7d84e" stroke="#c69a10" stroke-width=".7"/><ellipse cx="11.5" cy="12.8" rx="3.2" ry="1.3" fill="#f7d84e" stroke="#c69a10" stroke-width=".7"/></svg>
<span class="a" style="left:29px;top:5px;color:#3c3c38;-webkit-text-stroke:0.45px #3c3c38;letter-spacing:-0.05px;font-size:14px">Оформить</span></div>
<!-- bottom grid -->
<div class="grid" style="left:6px;top:758px;width:1666px;height:80px"></div>
<div class="hd" style="left:8px;top:759px;width:258px;height:28px"><span style="left:7px;letter-spacing:-0.17px;top:7px;">Номенклатура</span></div>
<div class="hl" style="left:267px;top:759px;height:29px"></div>
<div class="hd" style="left:269px;top:759px;width:106px;height:28px"><span style="left:7px;letter-spacing:-0.34px;top:7px;">Характеристика</span></div>
<div class="hl" style="left:376px;top:759px;height:29px"></div>
<div class="hd" style="left:378px;top:759px;width:84px;height:28px"><span style="left:7px;letter-spacing:-0.17px;top:7px;">Склад</span></div>
<div class="hl" style="left:463px;top:759px;height:29px"></div>
<div class="hd" style="left:465px;top:759px;width:84px;height:28px"><span style="left:7px;letter-spacing:-0.17px;top:7px;">Количество</span></div>
<div class="hl" style="left:550px;top:759px;height:29px"></div>
<div class="hd" style="left:552px;top:759px;width:84px;height:28px"><span style="left:7px;letter-spacing:-0.17px;top:7px;">Цена</span></div>
<div class="hl" style="left:637px;top:759px;height:29px"></div>
<div class="hd" style="left:639px;top:759px;width:147px;height:28px"><span style="left:7px;letter-spacing:-0.17px;word-spacing:2px;top:7px;">Цена с учетом скидки</span></div>
<div class="hl" style="left:787px;top:759px;height:29px"></div>
<div class="hd" style="left:789px;top:759px;width:84px;height:28px"><span style="left:7px;letter-spacing:-0.17px;top:7px;">Сумма</span></div>
<div class="hl" style="left:874px;top:759px;height:29px"></div>
<div class="hd" style="left:876px;top:759px;width:115px;height:28px"><span style="left:7px;letter-spacing:-0.17px;top:7px;">Себестоимость</span></div>
<div class="hl" style="left:992px;top:759px;height:29px"></div>
<div class="hd" style="left:994px;top:759px;width:148px;height:28px"><span style="left:7px;letter-spacing:-0.17px;word-spacing:2px;top:7px;">Сумма себестоимости</span></div>
<div class="hl" style="left:1143px;top:759px;height:29px"></div>
<div class="hd" style="left:1145px;top:759px;width:115px;height:28px"><span style="left:7px;letter-spacing:-0.17px;top:7px;">Наценка</span></div>
<div class="hl" style="left:1261px;top:759px;height:29px"></div>
<div class="hd" style="left:1263px;top:759px;width:85px;height:28px"><span style="left:7px;letter-spacing:-0.17px;word-spacing:2px;top:7px;">% наценки</span></div>
<div class="hl" style="left:1349px;top:759px;height:29px"></div>
<div class="hd" style="left:1351px;top:759px;width:115px;height:28px"><span style="left:7px;letter-spacing:-0.17px;word-spacing:2px;top:7px;">Сумма руч.</span></div>
<div class="hl" style="left:1467px;top:759px;height:29px"></div>
<div class="hd" style="left:1469px;top:759px;width:85px;height:28px"><span style="left:7px;letter-spacing:-0.17px;word-spacing:2px;top:7px;">% руч.</span></div>
<div class="hl" style="left:1555px;top:759px;height:29px"></div>
<div class="hd" style="left:1557px;top:759px;width:115px;height:28px"><span style="left:7px;letter-spacing:-0.17px;word-spacing:2px;top:7px;">Артикул (кросс)</span></div>
<div class="a" style="left:7px;top:788px;width:1664px;height:1px;background:#c9c9c9"></div>
<div class="c" style="left:7px;top:790px;width:260px;height:27px;background:#fff2c9;letter-spacing:-0.08px;"><span style="left:8px;top:7px">Втулка балансира D=134 d=121 (желт<span style="letter-spacing:1.1px">...</span></span></div>
<div class="c" style="left:268px;top:790px;width:108px;height:27px;background:#fff2c9;letter-spacing:-0.08px;"></div>
<div class="c" style="left:377px;top:790px;width:86px;height:27px;background:#fff2c9;letter-spacing:-0.08px;"><span style="left:8px;top:7px">Екатерин<span style="letter-spacing:1.1px">...</span></span></div>
<div class="c" style="left:464px;top:790px;width:86px;height:27px;background:#fff2c9;letter-spacing:-0.08px;"><span style="right:8px;top:7px">2</span></div>
<div class="c" style="left:551px;top:790px;width:86px;height:27px;background:#fff2c9;letter-spacing:-0.08px;"><span style="right:8px;top:7px">2 681,00</span></div>
<div class="c" style="left:638px;top:790px;width:149px;height:27px;background:#fff2c9;letter-spacing:-0.08px;"><span style="right:8px;top:7px">2 546,95</span></div>
<div class="c" style="left:788px;top:790px;width:86px;height:27px;background:#ffe38f;letter-spacing:-0.08px;"><span style="right:8px;top:7px">5 093,90</span></div>
<div class="c" style="left:875px;top:790px;width:117px;height:27px;background:#fff2c9;letter-spacing:-0.08px;"><span style="right:8px;top:7px">1 142,97</span></div>
<div class="c" style="left:993px;top:790px;width:150px;height:27px;background:#fff2c9;letter-spacing:-0.08px;"><span style="right:8px;top:7px">2 285,94</span></div>
<div class="c" style="left:1144px;top:790px;width:117px;height:27px;background:#fff2c9;letter-spacing:-0.08px;"><span style="right:8px;top:7px">2 807,96</span></div>
<div class="c" style="left:1262px;top:790px;width:87px;height:27px;background:#fff2c9;letter-spacing:-0.08px;"><span style="right:8px;top:7px">122,84</span></div>
<div class="c" style="left:1350px;top:790px;width:117px;height:27px;background:#fff2c9;letter-spacing:-0.08px;"><span style="right:8px;top:7px">268,10</span></div>
<div class="c" style="left:1468px;top:790px;width:87px;height:27px;background:#fff2c9;letter-spacing:-0.08px;"><span style="right:8px;top:7px">5,00</span></div>
<div class="c" style="left:1556px;top:790px;width:115px;height:27px;background:#fff2c9;letter-spacing:-0.08px;"></div>
<div class="a" style="left:7px;top:818px;width:1664px;height:1px;background:#e6e6e6"></div>
<!-- /GEN:BOTTOM -->

</body>
</html>
